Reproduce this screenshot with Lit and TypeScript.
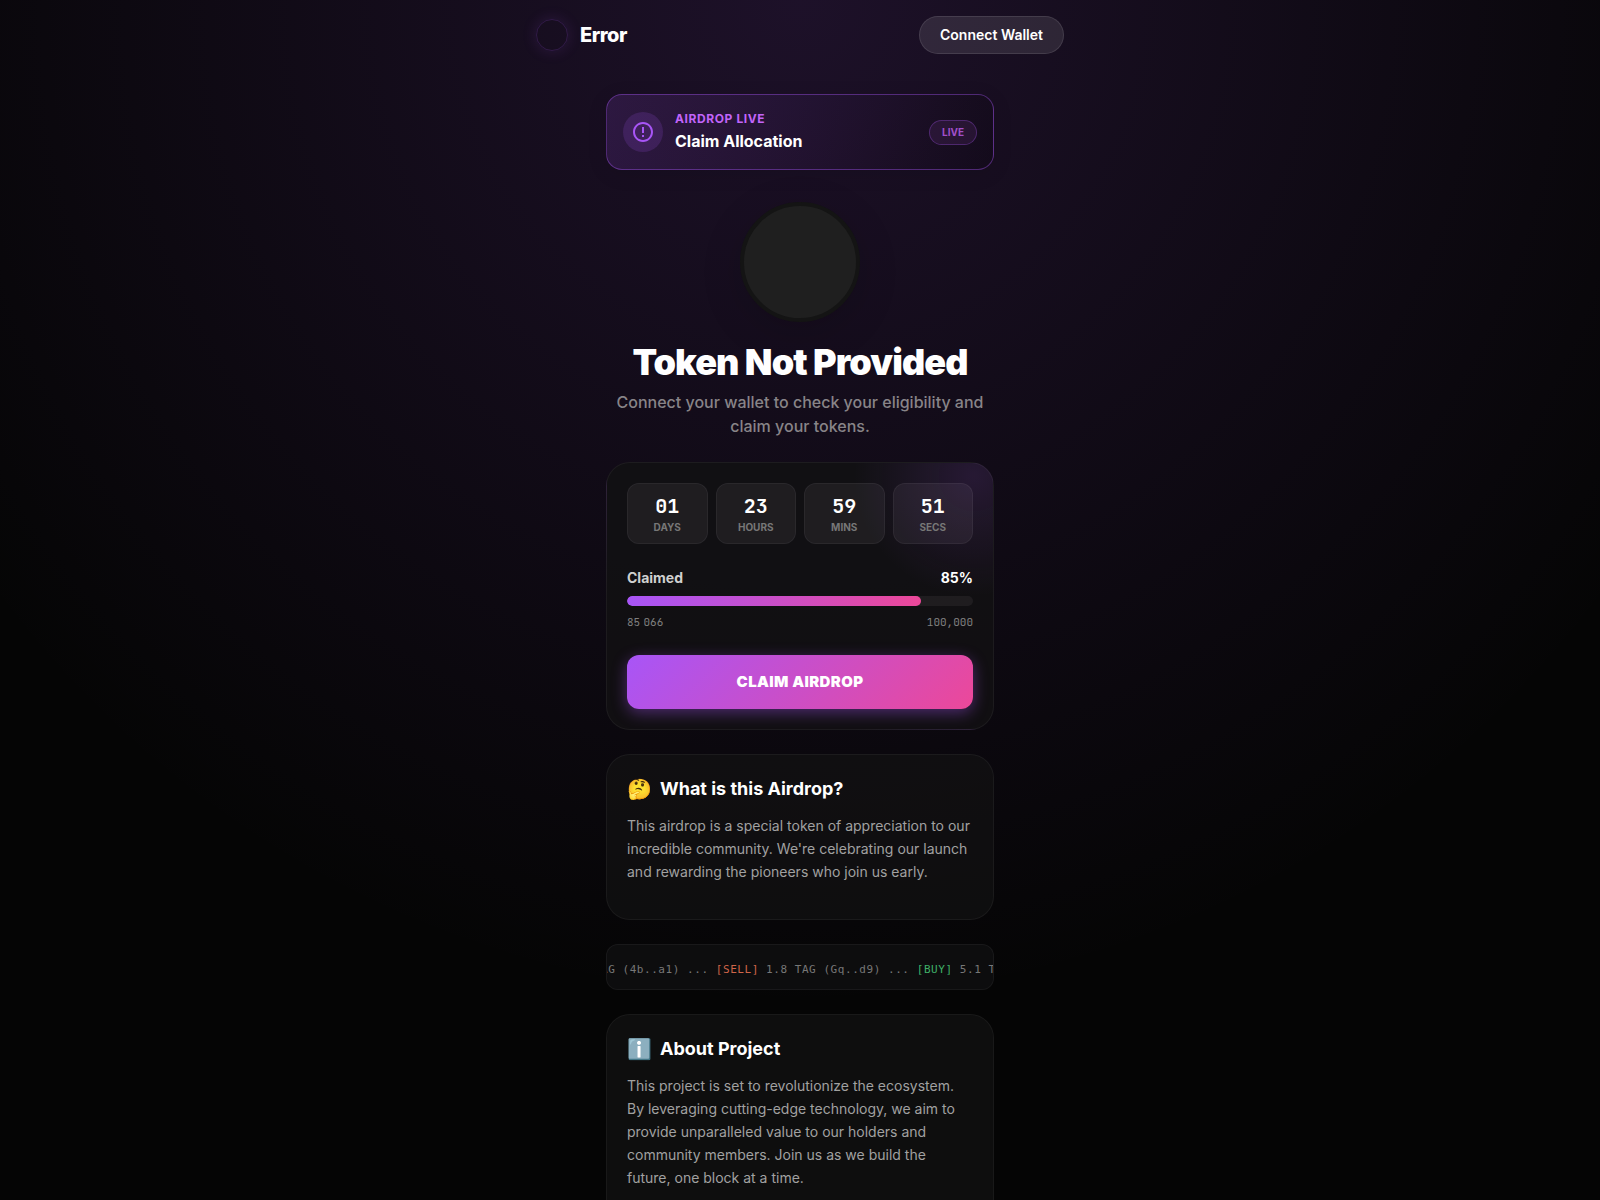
import { LitElement, html, css, svg } from "lit";
import { customElement, property, state } from "lit/decorators.js";

const base = css`
  *,
  *::before,
  *::after {
    box-sizing: border-box;
  }
  h1,
  h2,
  p {
    margin: 0;
  }
`;

@customElement("countdown-timer")
class CountdownTimer extends LitElement {
  static styles = [
    base,
    css`
      :host {
        display: block;
      }
      .timer {
        display: grid;
        grid-template-columns: repeat(4, 1fr);
        gap: 8px;
      }
      .unit {
        display: flex;
        flex-direction: column;
        align-items: center;
        padding: 9px 4px 8px;
        border: 1px solid rgba(255, 255, 255, 0.05);
        border-radius: 12px;
        background: rgba(250, 245, 255, 0.06);
      }
      .value {
        padding-bottom: 1px;
        font: 700 20px/26px "JetBrains Mono", "DejaVu Sans Mono", monospace;
        color: #fff;
      }
      .label {
        font-size: 10px;
        line-height: 15px;
        font-weight: 700;
        color: #777;
      }
    `,
  ];

  @property({ attribute: false }) units: [string, string][] = [];

  render() {
    return html`<div class="timer" role="timer">
      ${this.units.map(
        ([value, label]) => html`<div class="unit">
          <span class="value">${value}</span>
          <span class="label">${label}</span>
        </div>`,
      )}
    </div>`;
  }
}

@customElement("info-card")
class InfoCard extends LitElement {
  static styles = [
    base,
    css`
      :host {
        display: block;
      }
      .card {
        padding: 20px 20px 36px;
        border: 1px solid rgba(255, 255, 255, 0.05);
        border-radius: 24px;
        background: rgba(20, 20, 20, 0.6);
      }
      .title {
        display: flex;
        align-items: center;
        gap: 8px;
        margin-bottom: 11px;
        font-size: 18px;
        line-height: 28px;
        font-weight: 700;
        color: #fff;
      }
      .emoji {
        font-size: 20px;
        font-weight: 400;
      }
      .text {
        font-size: 14px;
        line-height: 23px;
        color: #a1a1a1;
      }
    `,
  ];

  @property() emoji = "";
  @property() heading = "";
  @property() text = "";

  render() {
    return html`<section class="card">
      <h2 class="title"><span class="emoji">${this.emoji}</span>${this.heading}</h2>
      <p class="text">${this.text}</p>
    </section>`;
  }
}

type Trade = { side: "buy" | "sell"; amount: string; wallet: string };

@customElement("trade-ticker")
class TradeTicker extends LitElement {
  static styles = [
    base,
    css`
      :host {
        display: block;
      }
      .ticker {
        overflow: hidden;
        padding: 16px 0 10px;
        border: 1px solid rgba(255, 255, 255, 0.05);
        border-radius: 12px;
        background: rgba(18, 18, 20, 0.6);
      }
      .track {
        width: max-content;
        transform: translateX(-85px);
        white-space: pre;
        font: 11px/18px "DejaVu Sans Mono", monospace;
        letter-spacing: 0.05em;
        color: #777;
      }
      .buy {
        color: #3fb068;
      }
      .sell {
        color: #cf6549;
      }
    `,
  ];

  @property({ attribute: false }) trades: Trade[] = [];

  render() {
    return html`<div class="ticker">
      <div class="track">${this.trades.map(
        (t) =>
          html`<span class=${t.side}>[${t.side.toUpperCase()}]</span> ${t.amount} TAG (${t.wallet}) ... `,
      )}</div>
    </div>`;
  }
}

@customElement("app-root")
class AppRoot extends LitElement {
  static styles = [
    base,
    css`
      :host {
        display: block;
        height: 100vh;
        overflow: hidden;
        font-family: Inter, sans-serif;
        font-size: 16px;
        line-height: 24px;
        color: #fff;
        background:
          radial-gradient(circle at 50% 0%, rgba(168, 85, 247, 0.15), transparent 70%),
          #050505;
      }
      button {
        font-family: inherit;
        cursor: pointer;
      }
      .header {
        display: flex;
        align-items: center;
        justify-content: space-between;
        max-width: 560px;
        margin: 0 auto;
        padding: 16px;
      }
      .brand {
        display: flex;
        align-items: center;
        gap: 12px;
        font-size: 20px;
        font-weight: 800;
        letter-spacing: -0.025em;
      }
      .logo {
        width: 32px;
        height: 32px;
        border: 1px solid rgba(168, 85, 247, 0.18);
        border-radius: 50%;
        box-shadow: 0 0 15px rgba(168, 85, 247, 0.15);
      }
      .connect {
        height: 38px;
        padding: 0 20px 2px;
        border: 1px solid rgba(255, 255, 255, 0.1);
        border-radius: 20px;
        background: rgba(255, 255, 255, 0.1);
        color: #fff;
        font-size: 14px;
        font-weight: 600;
      }
      .content {
        display: flex;
        flex-direction: column;
        gap: 24px;
        max-width: 420px;
        margin: 0 auto;
        padding: 24px 16px;
      }
      .banner {
        display: flex;
        align-items: center;
        gap: 12px;
        padding: 16px;
        border: 1px solid rgba(168, 85, 247, 0.4);
        border-radius: 16px;
        background: linear-gradient(100deg, rgba(168, 85, 247, 0.15), rgba(0, 0, 0, 0.15));
        box-shadow: 0 4px 20px rgba(0, 0, 0, 0.1);
      }
      .badge {
        display: flex;
        align-items: center;
        justify-content: center;
        width: 40px;
        height: 40px;
        border-radius: 50%;
        background: rgba(168, 85, 247, 0.16);
      }
      .banner-text {
        flex: 1;
      }
      .eyebrow {
        font-size: 12px;
        line-height: 16px;
        font-weight: 700;
        letter-spacing: 0.05em;
        color: #c264fa;
      }
      .banner-title {
        padding-top: 2px;
        font-size: 16px;
        line-height: 24px;
        font-weight: 700;
      }
      .live {
        padding: 4px 12px;
        border: 1px solid rgba(168, 85, 247, 0.3);
        border-radius: 20px;
        background: rgba(168, 85, 200, 0.12);
        font-size: 10px;
        line-height: 15px;
        font-weight: 700;
        color: #a14fc9;
      }
      .hero {
        display: flex;
        flex-direction: column;
        align-items: center;
        padding-top: 8px;
        text-align: center;
      }
      .token {
        width: 120px;
        height: 120px;
        border: 4px solid #141414;
        border-radius: 50%;
        background: #1f1f1f;
        box-shadow: 0 10px 40px rgba(0, 0, 0, 0.15);
      }
      .title {
        margin: 20px 0 8px;
        font-size: 36px;
        line-height: 40px;
        font-weight: 900;
        letter-spacing: -0.025em;
      }
      .subtitle {
        font-weight: 500;
        color: #888488;
      }
      .claim {
        padding: 20px;
        border: 1px solid rgba(255, 255, 255, 0.05);
        border-radius: 24px;
        background:
          radial-gradient(circle at 95% 5%, rgba(168, 85, 247, 0.14), transparent 120px),
          rgba(18, 17, 19, 0.9);
      }
      .row {
        display: flex;
        justify-content: space-between;
      }
      .progress-head {
        margin: 22px 0 6px;
        font-size: 14px;
        font-weight: 700;
        color: #d0d0d0;
      }
      .percent {
        color: #fff;
      }
      .bar {
        height: 10px;
        overflow: hidden;
        border-radius: 5px;
        background: rgba(250, 245, 255, 0.06);
      }
      .fill {
        height: 100%;
        border-radius: 5px;
        background: linear-gradient(90deg, #a855f7, #ec4899);
      }
      .counts {
        margin: 8px 0 25px;
        font: 11px/16px "JetBrains Mono", "DejaVu Sans Mono", monospace;
        color: #808080;
      }
      .cta {
        display: block;
        width: 100%;
        height: 54px;
        padding: 0 0 2px;
        border: 0;
        border-radius: 12px;
        background: linear-gradient(135deg, #a855f7, #ec4899);
        box-shadow: 0 4px 15px rgba(168, 85, 247, 0.4);
        color: #fff;
        font-size: 15px;
        font-weight: 900;
        letter-spacing: 0.025em;
      }
    `,
  ];

  @state() private percent = 85;

  private units: [string, string][] = [
    ["01", "DAYS"],
    ["23", "HOURS"],
    ["59", "MINS"],
    ["51", "SECS"],
  ];

  private trades: Trade[] = [
    { side: "buy", amount: "2.5", wallet: "4b..a1" },
    { side: "sell", amount: "1.8", wallet: "Gq..d9" },
    { side: "buy", amount: "5.1", wallet: "8x..f2" },
  ];

  private alertIcon = svg`<svg width="24" height="24" viewBox="0 0 24 24" fill="#a855f7" aria-hidden="true">
    <path d="M12 2C6.48 2 2 6.48 2 12s4.48 10 10 10 10-4.48 10-10S17.52 2 12 2zm0 18c-4.41 0-8-3.59-8-8s3.59-8 8-8 8 3.59 8 8-3.59 8-8 8zm-1-5h2v2h-2zm0-8h2v6h-2z"/>
  </svg>`;

  render() {
    return html`
      <header class="header">
        <div class="brand"><span class="logo"></span>Error</div>
        <button class="connect" type="button">Connect Wallet</button>
      </header>
      <main class="content">
        <section class="banner">
          <span class="badge">${this.alertIcon}</span>
          <div class="banner-text">
            <div class="eyebrow">AIRDROP LIVE</div>
            <div class="banner-title">Claim Allocation</div>
          </div>
          <span class="live">LIVE</span>
        </section>
        <section class="hero">
          <div class="token"></div>
          <h1 class="title">Token Not Provided</h1>
          <p class="subtitle">
            Connect your wallet to check your eligibility and claim your tokens.
          </p>
        </section>
        <section class="claim">
          <countdown-timer .units=${this.units}></countdown-timer>
          <div class="row progress-head">
            <span>Claimed</span><span class="percent">${this.percent}%</span>
          </div>
          <div class="bar" role="progressbar" aria-label="Claimed" aria-valuenow=${this.percent}>
            <div class="fill" style="width: ${this.percent}%"></div>
          </div>
          <div class="row counts"><span>85\u202f066</span><span>100,000</span></div>
          <button class="cta" type="button">CLAIM AIRDROP</button>
        </section>
        <info-card
          emoji="🤔"
          heading="What is this Airdrop?"
          text="This airdrop is a special token of appreciation to our incredible community. We're celebrating our launch and rewarding the pioneers who join us early."
        ></info-card>
        <trade-ticker .trades=${this.trades}></trade-ticker>
        <info-card
          emoji="ℹ️"
          heading="About Project"
          text="This project is set to revolutionize the ecosystem. By leveraging cutting-edge technology, we aim to provide unparalleled value to our holders and community members. Join us as we build the future, one block at a time."
        ></info-card>
      </main>
    `;
  }
}
